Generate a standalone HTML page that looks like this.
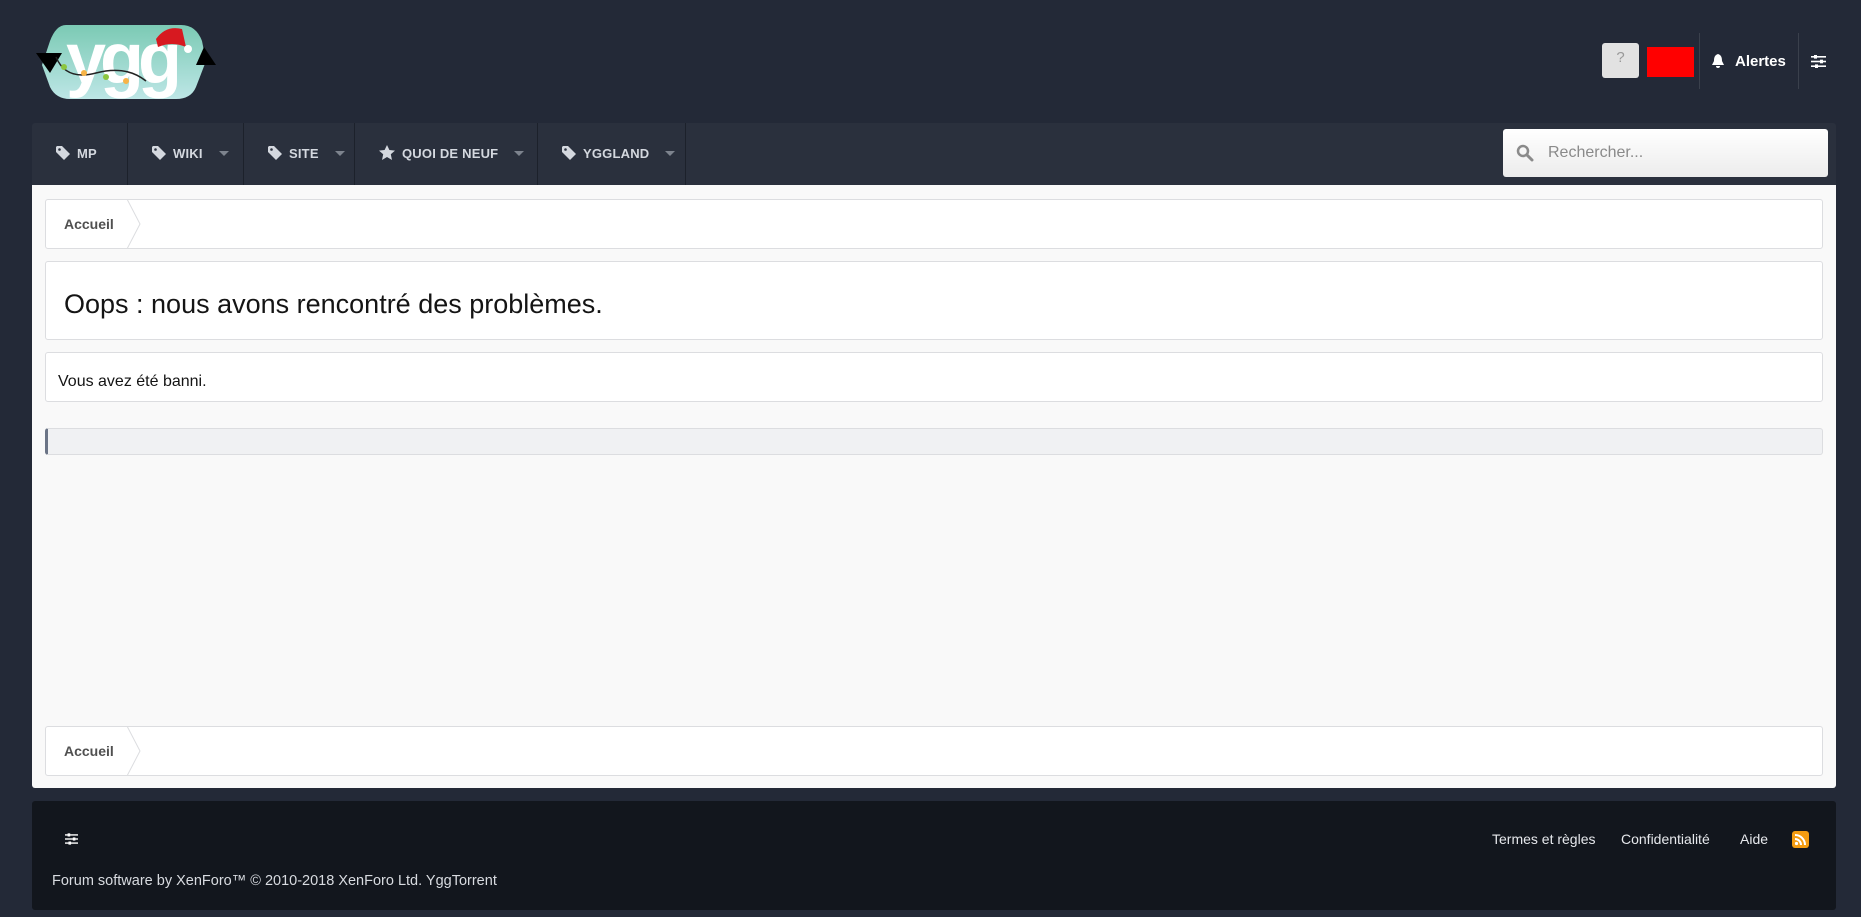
<!DOCTYPE html>
<html><head><meta charset="utf-8"><style>
*{box-sizing:border-box;margin:0;padding:0}
body{width:1861px;height:917px;background:#232937;font-family:"Liberation Sans",sans-serif;position:relative;overflow:hidden}
.abs{position:absolute}
.nav{left:32px;top:123px;width:1804px;height:62px;background:#2a303d;border-radius:3px 3px 0 0}
.ni{position:absolute;top:0;height:62px;border-right:1px solid #1c212b;color:#d4d8df;font-weight:bold;font-size:13px;line-height:62px;padding-left:24px;letter-spacing:.2px}
.ni svg{vertical-align:-2px;margin-right:7px}
.car{display:inline-block;width:0;height:0;border-left:5px solid transparent;border-right:5px solid transparent;border-top:5px solid #7d838e;margin-left:16px;vertical-align:2px}
.content{left:32px;top:185px;width:1804px;height:603px;background:#f9f9f9;border-radius:0 0 3px 3px}
.box{position:absolute;left:13px;width:1778px;background:#fff;border:1px solid #dcdde0;border-radius:3px}
.bc{height:50px;color:#505050;font-weight:bold;font-size:14px;line-height:48px;padding-left:18px}
.bc svg{position:absolute;left:80px;top:-1px}
.foot{left:32px;top:801px;width:1804px;height:109px;background:#12161d;border-radius:3px;color:#e6e8ec;font-size:14px}
</style></head><body>
<!-- logo -->
<svg class="abs" style="left:36px;top:21px" width="185" height="80" viewBox="0 0 185 80">
<defs><linearGradient id="g" x1="0" y1="0" x2="0" y2="1"><stop offset="0" stop-color="#7bcab4"/><stop offset="1" stop-color="#bde6e6"/></linearGradient></defs>
<path d="M30 4 H145 Q160 4 166 20 L170 40 L160 66 Q155 78 140 78 H34 Q20 78 14 66 L6 44 L14 20 Q20 4 30 4Z" fill="url(#g)"/>
<path d="M0 32 L26 32 L14 52Z" fill="#000"/><path d="M160 44 L180 44 L168 26Z" fill="#000"/>
<text x="30" y="62" font-family="Liberation Sans" font-weight="bold" font-size="72" fill="#fff" letter-spacing="-6">ygg</text>
<path d="M120 18 Q130 4 146 8 L150 26 Q136 20 122 26Z" fill="#d71920"/><circle cx="152" cy="28" r="4" fill="#fff"/>
<path d="M20 36 Q30 60 60 52 T110 60" stroke="#222" stroke-width="1.5" fill="none"/>
<circle cx="28" cy="46" r="3" fill="#8cc63f"/><circle cx="48" cy="52" r="3" fill="#f7b347"/><circle cx="70" cy="56" r="3" fill="#8cc63f"/><circle cx="90" cy="60" r="3" fill="#f7b347"/>
</svg>
<!-- top right -->
<div class="abs" style="left:1602px;top:43px;width:37px;height:35px;background:#e2e2e2;border-radius:3px;color:#999;font-size:15px;text-align:center;line-height:30px">?</div>
<div class="abs" style="left:1647px;top:47px;width:47px;height:30px;background:#f00"></div>
<div class="abs" style="left:1699px;top:33px;width:1px;height:56px;background:#3a404c"></div>
<svg class="abs" style="left:1711px;top:54px" width="14" height="15" viewBox="0 0 14 15"><path d="M7 0 C3.5 1 3 4 3 7 L1 11 H13 L11 7 C11 4 10.5 1 7 0Z M5 12 a2 2 0 0 0 4 0Z" fill="#fff"/></svg>
<div class="abs" style="left:1735px;top:53px;color:#fff;font-weight:bold;font-size:15px">Alertes</div>
<div class="abs" style="left:1798px;top:33px;width:1px;height:56px;background:#3a404c"></div>
<svg class="abs" style="left:1811px;top:55px" width="15" height="13" viewBox="0 0 15 13"><g fill="#fff"><rect x="0" y="1" width="15" height="1.6"/><rect x="0" y="5.7" width="15" height="1.6"/><rect x="0" y="10.4" width="15" height="1.6"/><rect x="3" y="0" width="3" height="3.6"/><rect x="9" y="4.7" width="3" height="3.6"/><rect x="4" y="9.4" width="3" height="3.6"/></g></svg>
<!-- nav -->
<div class="abs nav">
<div class="ni" style="left:0;width:96px"><svg width="14" height="14" viewBox="0 0 14 14"><path d="M0 1 V6 L8 14 L14 8 L6 0 H1Z" fill="#d4d8df"/><circle cx="3.5" cy="3.5" r="1.3" fill="#2a303d"/></svg>MP</div>
<div class="ni" style="left:96px;width:116px"><svg width="14" height="14" viewBox="0 0 14 14"><path d="M0 1 V6 L8 14 L14 8 L6 0 H1Z" fill="#d4d8df"/><circle cx="3.5" cy="3.5" r="1.3" fill="#2a303d"/></svg>WIKI<span class="car"></span></div>
<div class="ni" style="left:212px;width:111px"><svg width="14" height="14" viewBox="0 0 14 14"><path d="M0 1 V6 L8 14 L14 8 L6 0 H1Z" fill="#d4d8df"/><circle cx="3.5" cy="3.5" r="1.3" fill="#2a303d"/></svg>SITE<span class="car"></span></div>
<div class="ni" style="left:323px;width:183px"><svg width="16" height="15" viewBox="0 0 16 15"><path d="M8 0 L10.4 5 L16 5.6 L11.8 9.3 L13 15 L8 12 L3 15 L4.2 9.3 L0 5.6 L5.6 5Z" fill="#d4d8df"/></svg>QUOI DE NEUF<span class="car"></span></div>
<div class="ni" style="left:506px;width:148px"><svg width="14" height="14" viewBox="0 0 14 14"><path d="M0 1 V6 L8 14 L14 8 L6 0 H1Z" fill="#d4d8df"/><circle cx="3.5" cy="3.5" r="1.3" fill="#2a303d"/></svg>YGGLAND<span class="car"></span></div>
<div class="abs" style="left:1471px;top:6px;width:325px;height:48px;background:linear-gradient(#fff,#ececec);border-radius:3px;color:#8a8a8a;font-size:16px;line-height:48px;padding-left:45px">Rechercher...
<svg class="abs" style="left:13px;top:15px" width="18" height="18" viewBox="0 0 18 18"><circle cx="7" cy="7" r="5" stroke="#8a8a8a" stroke-width="2.5" fill="none"/><path d="M11 11 L16 16" stroke="#8a8a8a" stroke-width="3" stroke-linecap="round"/></svg></div>
</div>
<!-- content -->
<div class="abs content">
<div class="box bc" style="top:14px">Accueil<svg width="16" height="50" viewBox="0 0 16 50"><path d="M1 0 L14 25 L1 50" stroke="#dcdde0" fill="none"/></svg></div>
<div class="box" style="top:76px;height:79px;font-size:27px;color:#141414;line-height:85px;padding-left:18px">Oops : nous avons rencontré des problèmes.</div>
<div class="box" style="top:167px;height:50px;font-size:16px;color:#141414;line-height:58px;padding-left:12px">Vous avez été banni.</div>
<div class="box" style="top:243px;height:27px;background:#f0f1f3;border-left:3px solid #6b7486"></div>
<div class="box bc" style="top:541px">Accueil<svg width="16" height="50" viewBox="0 0 16 50"><path d="M1 0 L14 25 L1 50" stroke="#dcdde0" fill="none"/></svg></div>
</div>
<!-- footer -->
<div class="abs foot">
<svg class="abs" style="left:33px;top:32px" width="13" height="12" viewBox="0 0 15 13"><g fill="#fff"><rect x="0" y="1" width="15" height="1.6"/><rect x="0" y="5.7" width="15" height="1.6"/><rect x="0" y="10.4" width="15" height="1.6"/><rect x="3" y="0" width="3" height="3.6"/><rect x="9" y="4.7" width="3" height="3.6"/><rect x="4" y="9.4" width="3" height="3.6"/></g></svg>
<div class="abs" style="left:1460px;top:30px">Termes et règles</div>
<div class="abs" style="left:1589px;top:30px">Confidentialité</div>
<div class="abs" style="left:1708px;top:30px">Aide</div>
<svg class="abs" style="left:1760px;top:30px" width="17" height="17" viewBox="0 0 17 17"><rect width="17" height="17" rx="3" fill="#f39c12"/><circle cx="4.5" cy="12.5" r="1.6" fill="#fff"/><path d="M3 8 A6 6 0 0 1 9 14 M3 4 A10 10 0 0 1 13 14" stroke="#fff" stroke-width="2" fill="none"/></svg>
<div class="abs" style="left:20px;top:72px;font-size:14.5px;color:#d8dbe0">Forum software by XenForo™ © 2010-2018 XenForo Ltd. YggTorrent</div>
</div>
</body></html>
